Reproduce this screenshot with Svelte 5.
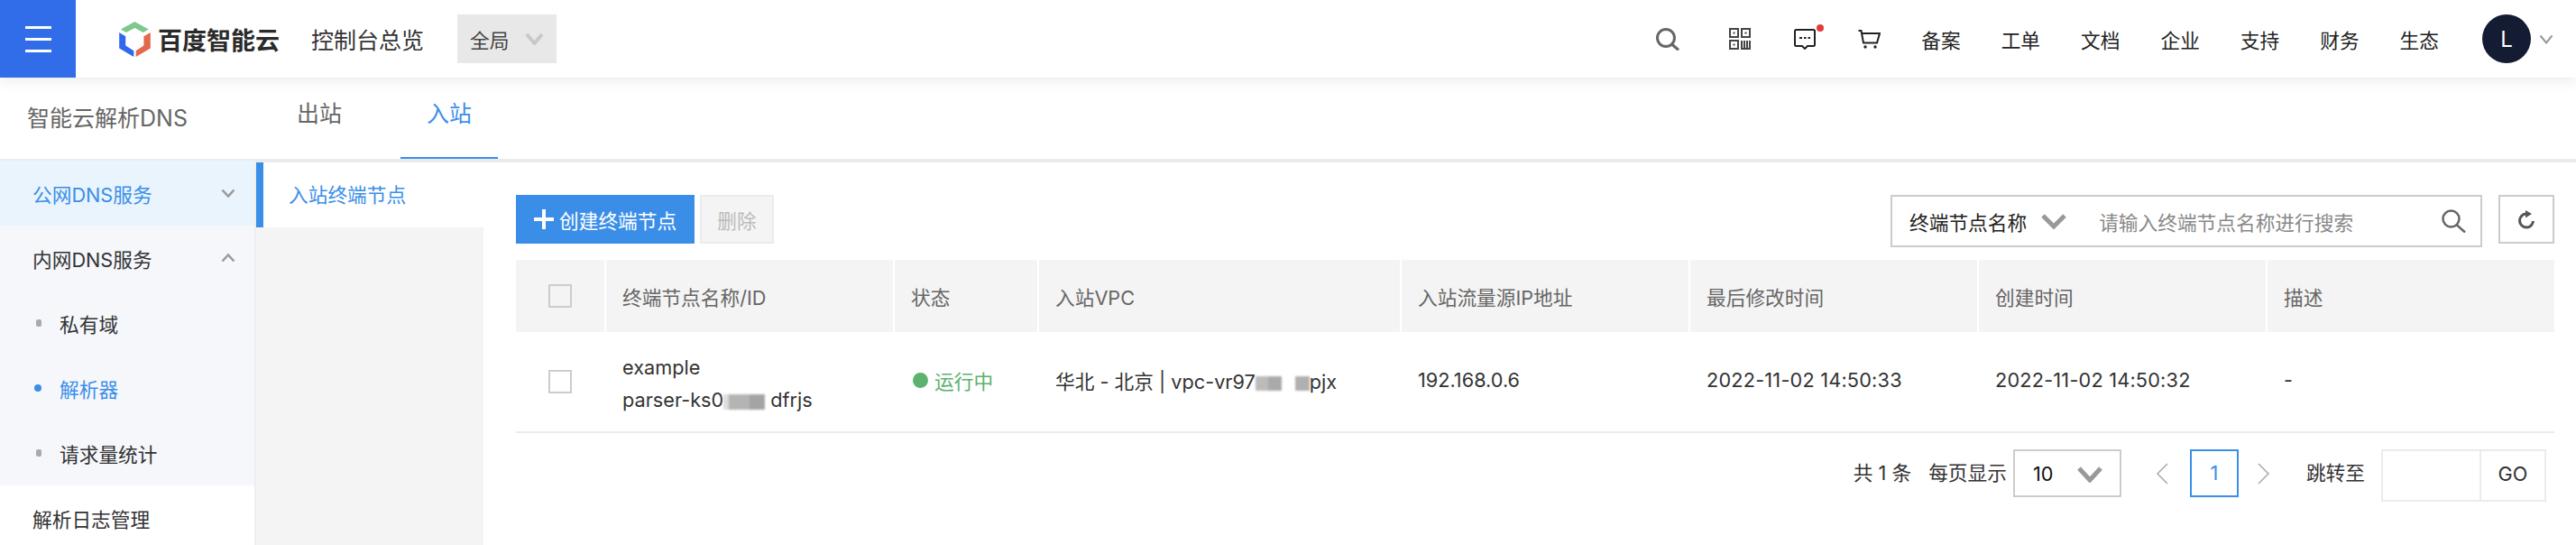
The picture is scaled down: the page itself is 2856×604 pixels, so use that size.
<script>
	const navLinks = ['备案', '工单', '文档', '企业', '支持', '财务', '生态'];
	const columns = [
		{ label: '终端节点名称/ID', width: 320 },
		{ label: '状态', width: 160 },
		{ label: '入站VPC', width: 402 },
		{ label: '入站流量源IP地址', width: 320 },
		{ label: '最后修改时间', width: 320 },
		{ label: '创建时间', width: 320 },
		{ label: '描述', width: 318 }
	];
</script>

<div class="page">
	<header class="topbar">
		<button class="burger" aria-label="菜单"><i></i><i></i><i></i></button>
		<div class="logo">
			<svg width="35" height="39" viewBox="97 37 103 116" aria-hidden="true">
				<path d="M148 37L194 62L176 73L148 58L120 73L102 62Z" fill="#7cc88e" />
				<path d="M97 73L118 85V116L145 133V153L97 125Z" fill="#3068ee" />
				<path d="M200 73V125L152 153V133L178 116V85Z" fill="#e2694c" />
			</svg>
			<span>百度智能云</span>
		</div>
		<span class="overview">控制台总览</span>
		<div class="region">
			<span>全局</span>
			<svg width="21" height="14" viewBox="0 0 21 14" aria-hidden="true">
				<path d="M2 2L10.500 12L19 2" fill="none" stroke="#c8c8c8" stroke-width="4" />
			</svg>
		</div>

		<div class="top-right">
			<svg class="ic-search" width="26" height="25" viewBox="0 0 26 25" aria-hidden="true">
				<circle cx="11" cy="11" r="9.500" fill="none" stroke="#666" stroke-width="3" />
				<path d="M17.500 18L25 24.500" fill="none" stroke="#666" stroke-width="3" />
			</svg>
			<svg class="ic-qr" width="24" height="24" viewBox="0 0 24 24" aria-hidden="true">
				<g fill="none" stroke="#444" stroke-width="2">
					<rect x="1" y="1" width="9" height="9" />
					<rect x="14" y="1" width="9" height="9" />
					<rect x="1" y="14" width="9" height="9" />
					<path d="M14 14V23H23V14M17 14V23M20 14V23" />
				</g>
				<rect x="4.500" y="4.500" width="2" height="2" fill="#444" />
				<rect x="17.500" y="4.500" width="2" height="2" fill="#444" />
				<rect x="4.500" y="17.500" width="2" height="2" fill="#444" />
			</svg>
			<div class="ic-msg">
				<svg width="24" height="23" viewBox="0 0 24 23" aria-hidden="true">
					<path d="M2.500 1H21.500A1.500 1.500 0 0 1 23 2.500V17.500A1.500 1.500 0 0 1 21.500 19H15L12 22L9 19H2.500A1.500 1.500 0 0 1 1 17.500V2.500A1.500 1.500 0 0 1 2.500 1Z" fill="none" stroke="#222" stroke-width="2" />
					<path d="M6 10H9M11 10H13.500M15.500 10H18" stroke="#222" stroke-width="2" />
				</svg>
				<span class="red-dot"></span>
			</div>
			<svg class="ic-cart" width="25" height="21" viewBox="0 0 25 21" aria-hidden="true">
				<path d="M0.500 1H3.500L6 14.500H21L24 4H4" fill="none" stroke="#222" stroke-width="2" />
				<circle cx="8" cy="19" r="1.700" fill="#222" />
				<circle cx="19" cy="19" r="1.700" fill="#222" />
			</svg>
			<nav class="links">
				{#each navLinks as link}
					<span>{link}</span>
				{/each}
			</nav>
			<div class="avatar">L</div>
			<svg width="16" height="11" viewBox="0 0 16 11" aria-hidden="true">
				<path d="M1.500 1.500L8 9.500L14.500 1.500" fill="none" stroke="#999" stroke-width="2" />
			</svg>
		</div>
	</header>

	<div class="subbar">
		<div class="brand">智能云解析DNS</div>
		<div class="tabs">
			<span class="tab">出站</span>
			<span class="tab active">入站</span>
		</div>
	</div>

	<div class="body">
		<aside class="sidebar">
			<div class="row selected">
				<span>公网DNS服务</span>
				<svg width="16" height="10" viewBox="0 0 16 10" aria-hidden="true">
					<path d="M1.500 1.500L8 8.500L14.500 1.500" fill="none" stroke="#999" stroke-width="2.500" />
				</svg>
			</div>
			<div class="group">
				<div class="row">
					<span>内网DNS服务</span>
					<svg width="16" height="10" viewBox="0 0 16 10" aria-hidden="true">
						<path d="M1.500 8.500L8 1.500L14.500 8.500" fill="none" stroke="#999" stroke-width="2.500" />
					</svg>
				</div>
				<div class="sub"><i class="bullet"></i>私有域</div>
				<div class="sub current"><i class="bullet"></i>解析器</div>
				<div class="sub"><i class="bullet"></i>请求量统计</div>
			</div>
			<div class="row">解析日志管理</div>
		</aside>

		<div class="subnav">
			<div class="subnav-item">入站终端节点</div>
		</div>

		<main class="main">
			<div class="toolbar">
				<button class="btn-primary">
					<svg width="22" height="22" viewBox="0 0 22 22" aria-hidden="true">
						<path d="M11 0V22M0 11H22" stroke="#fff" stroke-width="4" />
					</svg>
					创建终端节点
				</button>
				<button class="btn-disabled">删除</button>
				<div class="search">
					<span class="search-type">终端节点名称</span>
					<svg class="search-chevron" width="28" height="17" viewBox="0 0 28 17" aria-hidden="true">
						<path d="M2 2L14 14L26 2" fill="none" stroke="#999" stroke-width="5" />
					</svg>
					<span class="placeholder">请输入终端节点名称进行搜索</span>
					<svg class="search-ic" width="27" height="26" viewBox="0 0 27 26" aria-hidden="true">
						<circle cx="10.500" cy="10.500" r="9" fill="none" stroke="#666" stroke-width="2.500" />
						<path d="M16.500 17L26 25.500" fill="none" stroke="#666" stroke-width="2.500" />
					</svg>
				</div>
				<button class="btn-refresh" aria-label="刷新">
					<svg width="20" height="21" viewBox="0 0 20 21" aria-hidden="true">
						<path d="M17.500 12A7.500 7.500 0 1 1 9.500 4" fill="none" stroke="#555" stroke-width="3" />
						<path d="M9 0L16 4L9 8.500Z" fill="#555" />
					</svg>
				</button>
			</div>

			<table class="grid">
				<colgroup>
					<col style="width: 100px" />
					{#each columns as col}
						<col style="width: {col.width}px" />
					{/each}
				</colgroup>
				<thead>
					<tr>
						<th class="check"><span class="box"></span></th>
						{#each columns as col}
							<th>{col.label}</th>
						{/each}
					</tr>
				</thead>
				<tbody>
					<tr>
						<td class="check"><span class="box"></span></td>
						<td class="name">
							<div>example</div>
							<div>parser-ks0<span class="mask mask-a"></span>dfrjs</div>
						</td>
						<td><span class="status"><i></i>运行中</span></td>
						<td>华北 - 北京 | vpc-vr97<span class="mask mask-b"></span><span class="mask mask-c"></span>pjx</td>
						<td>192.168.0.6</td>
						<td class="time">2022-11-02 14:50:33</td>
						<td class="time">2022-11-02 14:50:32</td>
						<td>-</td>
					</tr>
				</tbody>
			</table>

			<div class="pager">
				<span class="total">共 1 条</span>
				<span class="per">每页显示</span>
				<div class="size">
					<span>10</span>
					<svg width="28" height="18" viewBox="0 0 28 18" aria-hidden="true">
						<path d="M2 2L14 15L26 2" fill="none" stroke="#999" stroke-width="5" />
					</svg>
				</div>
				<svg class="prev" width="14" height="24" viewBox="0 0 14 24" aria-hidden="true">
					<path d="M13 1L2 12L13 23" fill="none" stroke="#aaa" stroke-width="1.500" />
				</svg>
				<span class="page-no">1</span>
				<svg class="next" width="14" height="24" viewBox="0 0 14 24" aria-hidden="true">
					<path d="M1 1L12 12L1 23" fill="none" stroke="#aaa" stroke-width="1.500" />
				</svg>
				<span class="jump">跳转至</span>
				<div class="goto">
					<span class="goto-input"></span>
					<span class="goto-btn">GO</span>
				</div>
			</div>
		</main>
	</div>
</div>

<style>
	:global(body) {
		margin: 0;
		background: #fff;
	}
	.page {
		width: 2856px;
		height: 604px;
		overflow: hidden;
		font-family: Inter, "Noto Sans CJK SC", sans-serif;
		font-size: 21.7px;
		color: #333;
	}
	i { display: block; }
	svg { display: block; flex: none; }

	.topbar {
		position: relative;
		z-index: 2;
		display: flex;
		align-items: center;
		height: 86px;
		background: #fff;
		box-shadow: 0 4px 14px rgba(0, 0, 0, 0.08);
	}
	.burger {
		display: flex;
		flex-direction: column;
		align-items: center;
		justify-content: center;
		gap: 10px;
		width: 84px;
		height: 86px;
		padding: 0;
		border: 0;
		background: #316de8;
	}
	.burger i {
		width: 29px;
		height: 3px;
		background: #fff;
	}
	.logo {
		display: flex;
		align-items: center;
		gap: 8px;
		margin-left: 48px;
		font-size: 27px;
		font-weight: 700;
		color: #2a2a2a;
	}
	.overview {
		margin-left: 35px;
		font-size: 25px;
		color: #333;
	}
	.region {
		display: flex;
		align-items: center;
		justify-content: space-between;
		box-sizing: border-box;
		width: 110px;
		height: 54px;
		margin-left: 37px;
		padding: 0 14px;
		background: #e8e8e8;
		color: #444;
	}
	.top-right {
		display: flex;
		align-items: center;
		margin-left: auto;
		padding-right: 25px;
	}
	.ic-qr { margin-left: 55px; }
	.ic-msg {
		position: relative;
		margin-left: 48px;
	}
	.red-dot {
		position: absolute;
		top: -5px;
		left: 25px;
		width: 8px;
		height: 8px;
		border-radius: 50%;
		background: #e23c39;
	}
	.ic-cart { margin-left: 47px; }
	.links {
		display: flex;
		gap: 45px;
		margin-left: 45px;
		color: #222;
	}
	.avatar {
		display: flex;
		align-items: center;
		justify-content: center;
		width: 54px;
		height: 54px;
		margin-left: 48px;
		margin-right: 9px;
		border-radius: 50%;
		background: #141c33;
		color: #fff;
		font-size: 24px;
	}

	.subbar {
		display: flex;
		height: 90px;
		border-bottom: 2px solid #ebebeb;
	}
	.brand {
		width: 300px;
		padding-left: 30px;
		box-sizing: border-box;
		line-height: 90px;
		font-size: 25px;
		color: #666;
	}
	.tabs {
		display: flex;
		gap: 36px;
	}
	.tab {
		box-sizing: border-box;
		width: 108px;
		height: 90px;
		padding-bottom: 10px;
		line-height: 80px;
		text-align: center;
		font-size: 25px;
		color: #666;
	}
	.tab.active {
		color: #3b8ee8;
		border-bottom: 2px solid #3b8ee8;
	}

	.body {
		display: flex;
	}
	.sidebar {
		flex: none;
		width: 282px;
		height: 426px;
		border-right: 2px solid #eee;
	}
	.row {
		display: flex;
		align-items: center;
		justify-content: space-between;
		height: 72px;
		padding: 0 21px 0 36px;
	}
	.row.selected {
		background: #e9f4fd;
		color: #3b8ee8;
	}
	.group {
		background: #f5f7fb;
	}
	.sub {
		display: flex;
		align-items: center;
		height: 72px;
		padding-left: 40px;
	}
	.bullet {
		width: 6px;
		height: 8px;
		margin-right: 20px;
		border-radius: 2px;
		background: #aaa;
	}
	.sub.current {
		padding-left: 38px;
		color: #3b8ee8;
	}
	.sub.current .bullet {
		width: 8px;
		border-radius: 50%;
		background: #3b8ee8;
	}

	.subnav {
		flex: none;
		width: 252px;
		height: 424px;
		border-top: 2px solid #ebebeb;
		background: #f4f4f4;
	}
	.subnav-item {
		box-sizing: border-box;
		height: 72px;
		padding-left: 28px;
		border-left: 8px solid #3b8ee8;
		background: #fff;
		line-height: 72px;
		color: #3b8ee8;
	}

	.main {
		flex: 1;
		min-width: 0;
		padding: 36px 24px 0 36px;
		border-top: 2px solid #ebebeb;
	}
	.toolbar {
		display: flex;
		align-items: flex-start;
		height: 58px;
		margin-bottom: 14px;
	}
	.toolbar button {
		box-sizing: border-box;
		height: 54px;
		font: inherit;
	}
	.btn-primary {
		display: flex;
		align-items: center;
		gap: 6px;
		width: 198px;
		padding: 0 0 0 20px;
		border: 0;
		background: #3b8ee8;
		color: #fff;
	}
	.btn-disabled {
		width: 82px;
		margin-left: 6px;
		padding: 0;
		border: 2px solid #ebebeb;
		background: #f4f4f4;
		color: #bbb;
	}
	.search {
		display: flex;
		align-items: center;
		box-sizing: border-box;
		width: 656px;
		height: 58px;
		margin-left: auto;
		padding: 0 16px 0 19px;
		border: 2px solid #ccc;
	}
	.search-type {
		color: #222;
	}
	.search-chevron {
		margin-left: 16px;
	}
	.placeholder {
		margin-left: 36px;
		color: #888;
	}
	.search-ic {
		margin-left: auto;
	}
	.btn-refresh {
		display: flex;
		align-items: center;
		justify-content: center;
		width: 62px;
		margin-left: 18px;
		padding: 0;
		border: 2px solid #ccc;
		background: #fff;
	}

	.grid {
		width: 2260px;
		table-layout: fixed;
		border-collapse: separate;
		border-spacing: 0;
	}
	.grid th {
		box-sizing: border-box;
		height: 80px;
		padding: 0 0 0 18px;
		border-right: 2px solid #fff;
		background: #f4f4f4;
		text-align: left;
		font-weight: 400;
		color: #666;
	}
	.grid th:last-child { border-right: 0; }
	.grid td {
		box-sizing: border-box;
		height: 112px;
		padding: 0 0 4px 18px;
		border-bottom: 2px solid #ebebeb;
		white-space: nowrap;
	}
	.grid .check {
		padding: 0 0 0 36px;
	}
	.grid .name {
		padding: 4px 0 0 18px;
		line-height: 36px;
	}
	.grid .time {
		letter-spacing: 0.2px;
	}
	.box {
		display: block;
		box-sizing: border-box;
		width: 26px;
		height: 26px;
		border: 2px solid #ccc;
		background: #fff;
	}
	th .box { background: #f4f4f4; }
	.mask {
		display: inline-block;
		vertical-align: middle;
		filter: blur(1px);
	}
	.mask-a {
		width: 46px;
		height: 17px;
		margin-right: 6px;
		background: linear-gradient(90deg, #ddd 0, #ddd 12%, #b4b4b4 12%, #b4b4b4 64%, #a4a4a4 64%, #a4a4a4 100%);
	}
	.mask-b {
		width: 29px;
		height: 16px;
		margin-right: 15px;
		background: linear-gradient(90deg, #bbb 0, #bbb 50%, #aaa 50%);
	}
	.mask-c {
		width: 16px;
		height: 16px;
		background: #b0b0b0;
	}
	.status {
		display: flex;
		align-items: center;
		gap: 7px;
		margin-left: 2px;
		color: #5cb26e;
	}
	.status i {
		width: 17px;
		height: 17px;
		border-radius: 50%;
		background: #5cb26e;
	}

	.pager {
		display: flex;
		align-items: flex-start;
		justify-content: flex-end;
		margin-top: 18px;
		margin-right: 9px;
		line-height: 53px;
	}
	.per {
		margin-left: 19px;
	}
	.size {
		display: flex;
		align-items: center;
		justify-content: space-between;
		box-sizing: border-box;
		width: 120px;
		height: 53px;
		margin-left: 7px;
		padding: 2px 19px 0 20px;
		border: 2px solid #ccc;
		color: #111;
	}
	.prev {
		margin: 15px 0 0 38px;
	}
	.page-no {
		box-sizing: border-box;
		width: 54px;
		height: 53px;
		margin-left: 24px;
		border: 2px solid #3b8ee8;
		line-height: 49px;
		text-align: center;
		color: #3b8ee8;
	}
	.next {
		margin: 15px 0 0 21px;
	}
	.jump {
		margin-left: 40px;
	}
	.goto {
		display: flex;
		box-sizing: border-box;
		height: 58px;
		margin-left: 18px;
		border: 2px solid #ebebeb;
	}
	.goto-input {
		width: 107px;
		border-right: 2px solid #ebebeb;
	}
	.goto-btn {
		width: 70px;
		text-align: center;
		line-height: 50px;
	}
</style>
